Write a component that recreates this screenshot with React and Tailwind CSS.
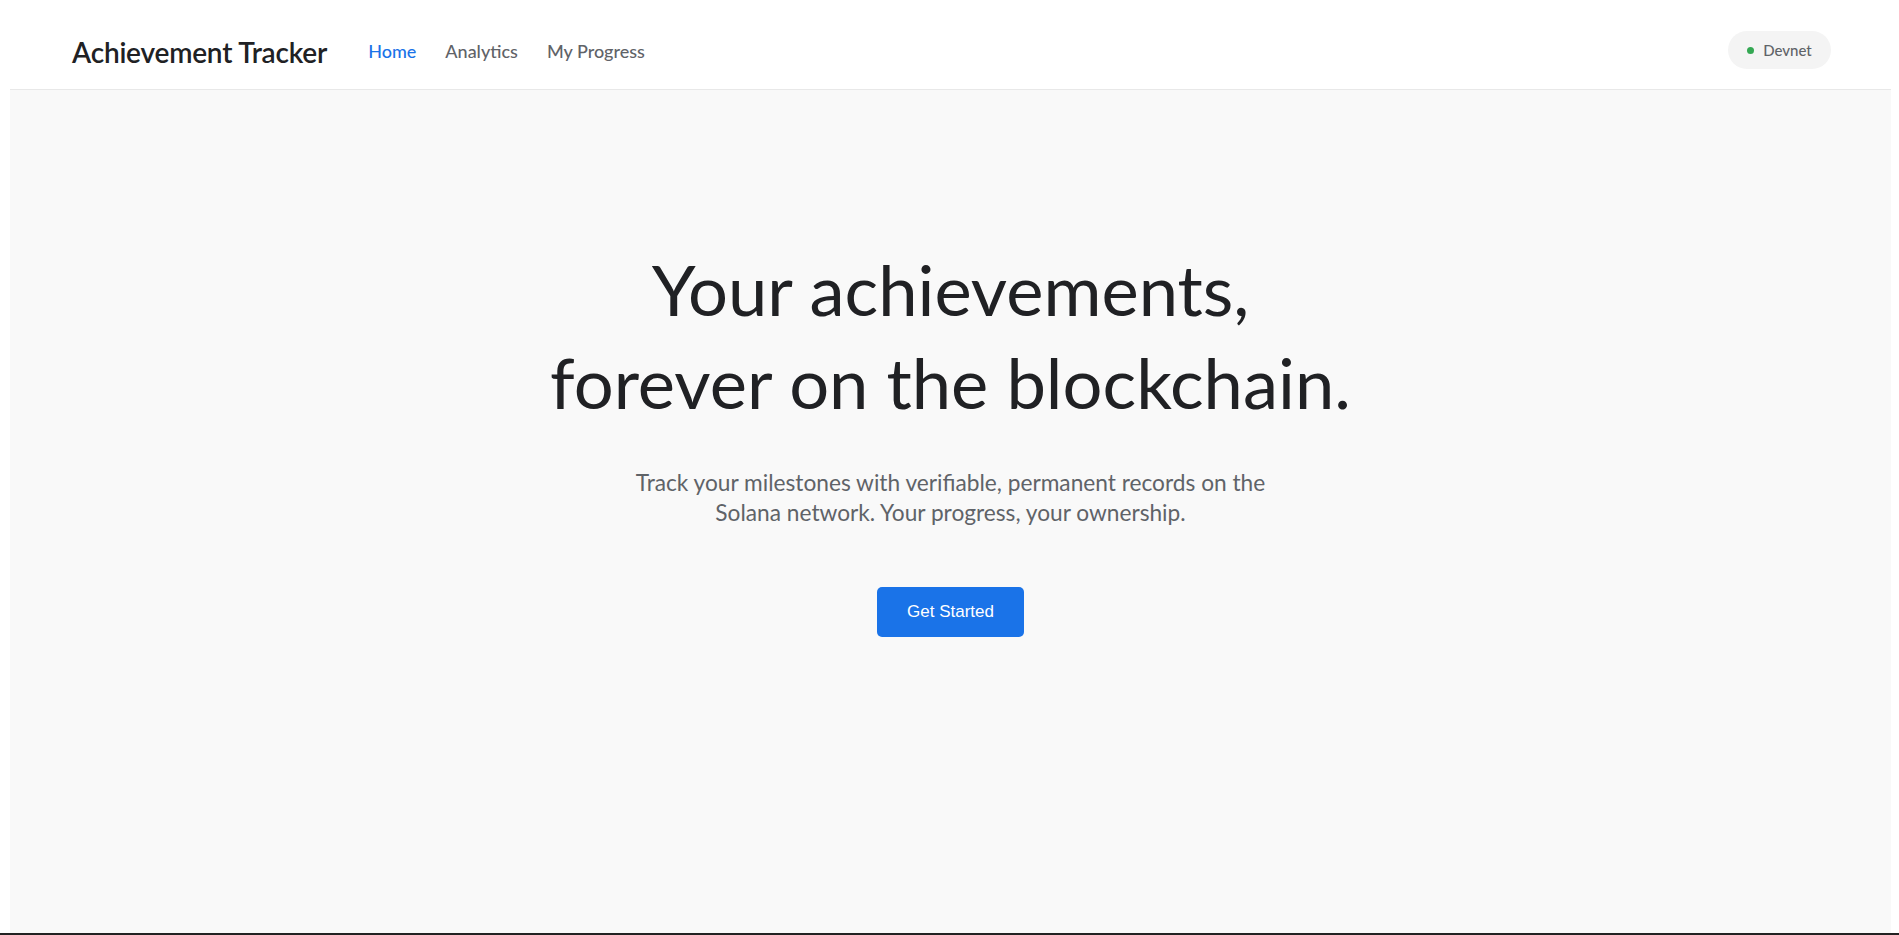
import React from "react";

const navLinks = [
  { label: "Home", active: true },
  { label: "Analytics" },
  { label: "My Progress" },
];

function Header() {
  return (
    <header className="h-[90px] shrink-0 bg-white border-b border-[#e8e8e8] pl-[62px] pr-[60px] pt-[14px] flex items-center justify-between">
      <div className="flex items-center">
        <span className="text-[28px] font-semibold text-[#202124] tracking-[-0.2px]">
          Achievement Tracker
        </span>
        <nav className="flex items-center gap-[29px] ml-[41px]">
          {navLinks.map((link) => (
            <a
              key={link.label}
              href="#"
              className={
                link.active
                  ? "text-[18px] font-medium text-[#1a73e8]"
                  : "text-[18px] font-medium text-[#5f6368]"
              }
            >
              {link.label}
            </a>
          ))}
        </nav>
      </div>
      <div className="-mt-[3px] h-[38px] w-[103px] rounded-full bg-[#f4f4f4] flex items-center justify-center gap-[9px]">
        <span className="w-[7px] h-[7px] rounded-full bg-[#34a853]"></span>
        <span className="text-[15px] font-medium text-[#5f6368]">Devnet</span>
      </div>
    </header>
  );
}

function Hero() {
  return (
    <main className="flex-1 bg-[#f9f9f9] flex flex-col items-center text-center pt-[152px]">
      <h1 className="text-[70.5px] leading-[93px] font-normal text-[#202124]">
        Your achievements,
        <br />
        forever on the blockchain.
      </h1>
      <p className="mt-[40px] max-w-[650px] text-[22.7px] leading-[30px] text-[#5f6368]">
        Track your milestones with verifiable, permanent records on the Solana
        network. Your progress, your ownership.
      </p>
      <button className="mt-[59px] h-[50px] px-[30px] rounded-[5px] bg-[#1a73e8] text-white text-[17px] font-['Liberation_Sans',Arial,sans-serif]">
        Get Started
      </button>
    </main>
  );
}

export default function App() {
  return (
    <div className="h-screen flex flex-col bg-white font-['Lato','Noto_Sans',sans-serif]">
      <div className="flex-1 flex flex-col pl-[10px] pr-[8px] min-h-0">
        <Header />
        <Hero />
      </div>
      <div className="h-[2px] bg-[#222]"></div>
    </div>
  );
}
